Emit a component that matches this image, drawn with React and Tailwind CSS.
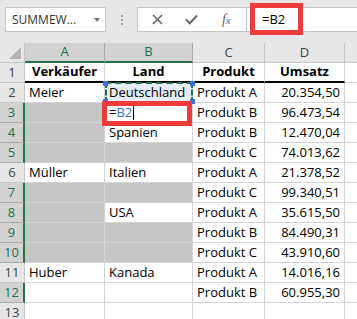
import React from 'react';

const F = { fontFamily: '"Open Sans", "Noto Sans", sans-serif' };

const rows = [
  { n: 1, sel: false, c: [{ v: 'Verkäufer', b: 1 }, { v: 'Land', b: 1 }, { v: 'Produkt', b: 1 }, { v: 'Umsatz', b: 1 }] },
  { n: 2, sel: false, c: [{ v: 'Meier' }, { v: 'Deutschland', ref: 1 }, { v: 'Produkt A' }, { v: '20.354,50', r: 1 }] },
  { n: 3, sel: true, c: [{ g: 1 }, { edit: 1 }, { v: 'Produkt B' }, { v: '96.473,54', r: 1 }] },
  { n: 4, sel: true, c: [{ g: 1 }, { v: 'Spanien' }, { v: 'Produkt B' }, { v: '12.470,04', r: 1 }] },
  { n: 5, sel: true, c: [{ g: 1 }, { g: 1 }, { v: 'Produkt C' }, { v: '74.013,62', r: 1 }] },
  { n: 6, sel: false, c: [{ v: 'Müller' }, { v: 'Italien' }, { v: 'Produkt A' }, { v: '21.378,52', r: 1 }] },
  { n: 7, sel: true, c: [{ g: 1 }, { g: 1 }, { v: 'Produkt C' }, { v: '99.340,51', r: 1 }] },
  { n: 8, sel: true, c: [{ g: 1 }, { v: 'USA' }, { v: 'Produkt A' }, { v: '35.615,50', r: 1 }] },
  { n: 9, sel: true, c: [{ g: 1 }, { g: 1 }, { v: 'Produkt B' }, { v: '84.490,31', r: 1 }] },
  { n: 10, sel: true, c: [{ g: 1 }, { g: 1 }, { v: 'Produkt C' }, { v: '43.910,60', r: 1 }] },
  { n: 11, sel: false, c: [{ v: 'Huber' }, { v: 'Kanada' }, { v: 'Produkt A' }, { v: '14.016,16', r: 1 }] },
  { n: 12, sel: true, c: [{}, {}, { v: 'Produkt B' }, { v: '60.955,30', r: 1 }] },
  { n: 13, sel: false, c: [{}, {}, {}, {}] },
];

const widths = ['w-[80px]', 'w-[88px]', 'w-[72px]', 'w-[80px]'];

function Cell({ cell, w, row }) {
  const first = row === 1;
  let cls = `${w} shrink-0 h-[20px] flex items-center px-[4px] overflow-hidden whitespace-nowrap text-[13px] text-black border-r border-[#d4d4d4] `;
  cls += first ? 'border-b-2 border-b-black ' : 'border-b ';
  if (cell.g) cls += 'bg-[#c6c6c6] border-[#b4b4b4] ';
  if (cell.ref) cls += 'bg-[#e4ebf5] ';
  if (cell.b) cls += 'justify-center font-bold ';
  if (cell.r) cls += 'justify-end ';
  return (
    <div className={cls}>
      {cell.edit ? (
        <span className="flex items-center">
          <span>=</span>
          <span className="text-[#3d6fcf]">B2</span>
          <span className="ml-[1px] w-[1px] h-[15px] bg-black" />
        </span>
      ) : (
        cell.v
      )}
    </div>
  );
}

export default function App() {
  return (
    <div className="w-[357px] h-[319px] overflow-hidden bg-white relative" style={F}>
      {/* toolbar */}
      <div className="h-[43px] bg-[#e6e6e6] flex items-start pt-[7px] pl-[5px]">
        <div className="w-[101px] h-[25px] bg-white border border-[#c6c6c6] flex items-center pl-[6px] pr-[5px] justify-between">
          <span className="text-[12px] text-[#333]">SUMMEW...</span>
          <span className="w-0 h-0 border-l-[3px] border-r-[3px] border-t-[4px] border-l-transparent border-r-transparent border-t-[#777]" />
        </div>
        <div className="w-[31px] h-[25px] flex flex-col items-center justify-center gap-[2px]">
          <span className="w-[2px] h-[2px] bg-[#a6a6a6]" />
          <span className="w-[2px] h-[2px] bg-[#a6a6a6]" />
          <span className="w-[2px] h-[2px] bg-[#a6a6a6]" />
        </div>
        <div className="w-[110px] h-[25px] bg-white border border-[#c6c6c6] flex items-center">
          <span className="w-[40px] flex justify-center">
            <svg width="11" height="11" viewBox="0 0 11 11">
              <path d="M1 1 L10 10 M10 1 L1 10" stroke="#666" strokeWidth="1.6" />
            </svg>
          </span>
          <span className="w-[30px] flex justify-center">
            <svg width="13" height="11" viewBox="0 0 13 11">
              <path d="M1 5.5 L4.8 9.2 L12 1.5" stroke="#666" strokeWidth="2" fill="none" />
            </svg>
          </span>
          <span className="w-[40px] flex justify-center text-[#666] italic text-[14px]" style={{ fontFamily: '"Liberation Serif", serif' }}>
            f<span className="text-[11px] mt-[3px]">x</span>
          </span>
        </div>
        <div className="flex-1 h-[25px] bg-white border-y border-[#c6c6c6] flex items-center pl-[15px]">
          <span className="text-[13px] text-black">=B2</span>
        </div>
      </div>

      {/* column headers */}
      <div className="flex h-[20px]">
        <div className="w-[25px] shrink-0 h-[20px] bg-[#e6e6e6] border-r border-b border-[#c6c6c6] relative">
          <div className="absolute right-[3px] bottom-[3px] w-0 h-0 border-l-[11px] border-t-[11px] border-l-transparent border-t-transparent border-b-0 border-r-0" style={{ borderRightWidth: 0 }} />
          <svg className="absolute right-[3px] bottom-[3px]" width="12" height="12" viewBox="0 0 12 12">
            <path d="M12 0 L12 12 L0 12 Z" fill="#b4b4b4" />
          </svg>
        </div>
        <div className="w-[80px] shrink-0 bg-[#d2d2d2] border-r border-[#ababab] border-b-2 border-b-[#217346] flex items-center justify-center text-[13px] text-[#217346]">A</div>
        <div className="w-[88px] shrink-0 bg-[#d2d2d2] border-r border-[#ababab] border-b-2 border-b-[#217346] flex items-center justify-center text-[13px] text-[#217346]">B</div>
        <div className="w-[72px] shrink-0 bg-[#e6e6e6] border-r border-b border-[#c6c6c6] flex items-center justify-center text-[13px] text-[#444]">C</div>
        <div className="w-[80px] shrink-0 bg-[#e6e6e6] border-r border-b border-[#c6c6c6] flex items-center justify-center text-[13px] text-[#444]">D</div>
        <div className="flex-1 bg-[#e6e6e6] border-b border-[#c6c6c6]" />
      </div>

      {/* grid */}
      <div className="relative">
        {rows.map((r) => (
          <div key={r.n} className="flex">
            <div
              className={`w-[25px] shrink-0 h-[20px] flex items-center justify-center text-[13px] border-b ${
                r.sel
                  ? 'bg-[#d2d2d2] text-[#217346] border-b-[#ababab] border-r-2 border-r-[#217346]'
                  : 'bg-[#e6e6e6] text-[#444] border-b-[#c6c6c6] border-r border-r-[#c6c6c6]'
              }`}
            >
              {r.n}
            </div>
            {r.c.map((c, i) => (
              <Cell key={i} cell={c} w={widths[i]} row={r.n} />
            ))}
            <div className="flex-1 h-[20px] border-b border-[#d4d4d4]" />
          </div>
        ))}

        {/* B2 marching ants reference border */}
        <div className="absolute left-[105px] top-[19px] w-[88px] h-[21px] border-2 border-dashed border-[#217346] pointer-events-none" />
        <div className="absolute left-[103px] top-[18px] w-[5px] h-[5px] bg-[#3d6fcf]" />
        <div className="absolute left-[190px] top-[18px] w-[5px] h-[5px] bg-[#3d6fcf]" />
        <div className="absolute left-[103px] top-[36px] w-[5px] h-[5px] bg-[#3d6fcf]" />
        <div className="absolute left-[190px] top-[36px] w-[5px] h-[5px] bg-[#3d6fcf]" />

        {/* red highlight in B3 */}
        <div className="absolute left-[102px] top-[38px] w-[90px] h-[25px] border-[5px] border-[#f23a3a]" />
      </div>

      {/* red highlight in formula bar */}
      <div className="absolute left-[250px] top-[3px] w-[53px] h-[32px] border-[5px] border-[#f23a3a]" />
    </div>
  );
}
